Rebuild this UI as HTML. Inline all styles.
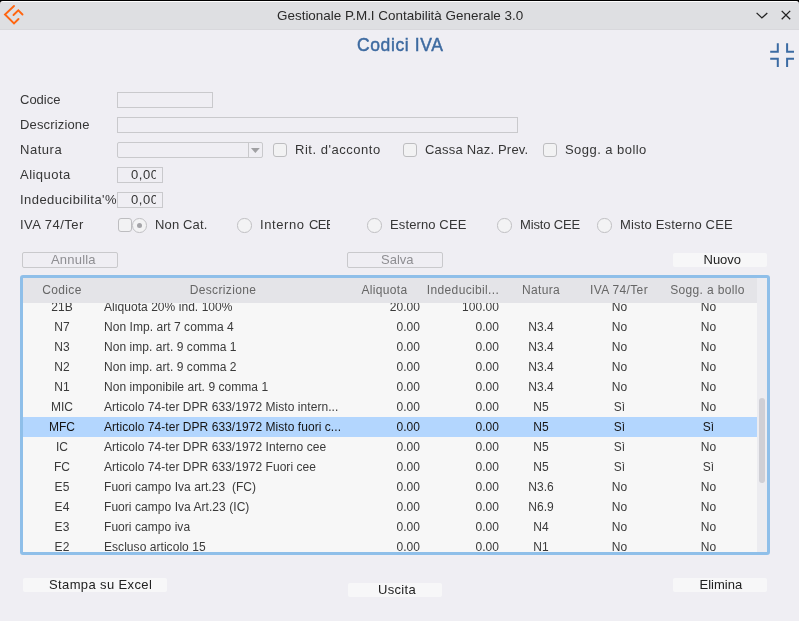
<!DOCTYPE html>
<html><head><meta charset="utf-8">
<style>
*{margin:0;padding:0;box-sizing:border-box}
html,body{width:799px;height:621px;overflow:hidden;background:#efeef3;font-family:"Liberation Sans",sans-serif;color:#333}
body{will-change:transform}
.a{position:absolute;white-space:nowrap}
#blk{position:absolute;left:0;top:0;width:799px;height:4px;background:#000}
#top{position:absolute;left:0;top:1px;width:799px;height:29px;background:#dedfe2;border-radius:3px 3px 0 0;border-top:1px solid #fdfdfd;border-bottom:1px solid #d8d8dc}
.lbl{position:absolute;white-space:nowrap;font-size:13px;color:#363636;left:20px}
.fld{position:absolute;border:1px solid #c9c9cc;background:#efeef3}
.chk{position:absolute;width:14px;height:14px;border:1.2px solid #bdbdc0;border-radius:3px;background:#f2f2f3}
.rad{position:absolute;width:14.5px;height:14.5px;border:1px solid #c0c0c3;border-radius:50%;background:#f3f3f4}
.opt{position:absolute;white-space:nowrap;font-size:13px;color:#363636}
.btn{position:absolute;white-space:nowrap;font-size:13px}
.btn span{position:absolute;line-height:15px}
.dis{border:1px solid #c9c9cc;border-radius:2px;color:#8e8e92;background:#efeef3}
.en{background:#f7f7f8;color:#222;border-radius:2px}
#tbl{position:absolute;left:20px;top:275px;width:750px;height:280px;border:3px solid #8fbfe9;border-radius:3px;background:#f7f7f7;overflow:hidden}
#rows{position:absolute;left:0;top:0;width:734px;height:274px;overflow:hidden}
#hdr{position:absolute;left:0;top:0;width:734px;height:25px;background:#e4e4e8;z-index:2}
.h{position:absolute;top:5px;font-size:12px;color:#666;text-align:center;letter-spacing:0.35px}
.row{position:absolute;left:0;width:734px;height:20px;font-size:12px;color:#3a3a3a;letter-spacing:0.05px}
.row span{position:absolute;top:3px}
.c0{left:0;width:78px;text-align:center}
.c1{left:81px}
.c2{left:322px;width:75px;text-align:right}
.c3{left:401px;width:75px;text-align:right}
.c4{left:479px;width:78px;text-align:center}
.c5{left:557.5px;width:78px;text-align:center}
.c6{left:636px;width:99px;text-align:center}
.sel{background:#b3d6fe;color:#141414}
#sb{position:absolute;left:734px;top:0;width:10px;height:274px;background:#ececf0}
#thumb{position:absolute;left:2px;top:120px;width:5.5px;height:85px;background:#cfcfd5;border-radius:3px}
</style></head><body>
<div id="blk"></div><div id="top"></div>
<svg class="a" style="left:0;top:0" width="30" height="30" viewBox="0 0 30 30">
<path d="M14 6 L5 14.5 L14 23.5 L18.5 19 M13.5 15 L18.3 10.3 L22.5 14.5" fill="none" stroke="#ff6510" stroke-width="1.9" stroke-linecap="round" stroke-linejoin="miter"/>
</svg>
<div class="a" style="left:277px;top:7.6px;font-size:13.45px;color:#2a2a2a">Gestionale P.M.I Contabilità Generale 3.0</div>
<svg class="a" style="left:750px;top:0" width="49" height="30" viewBox="750 0 49 30">
<path d="M756.6 12.9 L761.9 17.9 L767.3 12.9" fill="none" stroke="#222" stroke-width="1.3"/>
<path d="M781.7 10.9 L790.2 19.3 M790.2 10.9 L781.7 19.3" fill="none" stroke="#222" stroke-width="1.3"/>
</svg>
<div class="a" style="left:357px;top:35px;font-size:17.5px;color:#3d6aa0;-webkit-text-stroke:0.45px #3d6aa0;letter-spacing:0.6px">Codici IVA</div>
<svg class="a" style="left:760px;top:35px" width="40" height="40" viewBox="760 35 40 40">
<path d="M777.8 43.3 V51.8 H770.2 M787.1 43.3 V51.8 H794 M770.2 58.8 H777.8 V67 M794 58.8 H787.1 V67" fill="none" stroke="#3b6ba3" stroke-width="2"/>
</svg>

<div class="lbl" style="top:92px">Codice</div>
<div class="fld" style="left:117px;top:92px;width:96px;height:16px"></div>
<div class="lbl" style="top:117px;letter-spacing:0.15px">Descrizione</div>
<div class="fld" style="left:117px;top:117px;width:401px;height:16px"></div>
<div class="lbl" style="top:142px;letter-spacing:0.54px">Natura</div>
<div class="fld" style="left:117px;top:142px;width:146px;height:16px;border-radius:2px"></div>
<div class="a" style="left:248px;top:143px;width:1px;height:14px;background:#c9c9cc"></div>
<svg class="a" style="left:250px;top:146px" width="11" height="8"><path d="M0.9 2 L9.8 2 L5.35 7 Z" fill="#a0a0a3"/></svg>
<div class="chk" style="left:273px;top:143px"></div>
<div class="opt" style="left:295px;top:142px;letter-spacing:0.52px">Rit. d'acconto</div>
<div class="chk" style="left:403px;top:143px"></div>
<div class="opt" style="left:425px;top:142px;letter-spacing:0.2px">Cassa Naz. Prev.</div>
<div class="chk" style="left:543px;top:143px"></div>
<div class="opt" style="left:565px;top:142px;letter-spacing:0.45px">Sogg. a bollo</div>
<div class="lbl" style="top:167px;letter-spacing:0.47px">Aliquota</div>
<div class="fld" style="left:117px;top:167px;width:46px;height:16px"><div class="a" style="left:0;top:0;width:38px;height:14px;overflow:hidden"><span class="a" style="left:13px;top:-1.3px;font-size:13px;color:#333;letter-spacing:0.6px">0,00</span></div></div>
<div class="lbl" style="top:192px;letter-spacing:0.44px">Indeducibilita'%</div>
<div class="fld" style="left:117px;top:192px;width:46px;height:16px"><div class="a" style="left:0;top:0;width:38px;height:14px;overflow:hidden"><span class="a" style="left:13px;top:-1.3px;font-size:13px;color:#333;letter-spacing:0.6px">0,00</span></div></div>
<div class="lbl" style="top:217px;letter-spacing:0.48px">IVA 74/Ter</div>
<div class="chk" style="left:118px;top:218px"></div>
<div class="rad" style="left:132px;top:218px"><div style="position:absolute;left:3.75px;top:3.75px;width:5px;height:5px;border-radius:50%;background:#a4a4a8"></div></div>
<div class="opt" style="left:155px;top:217px;letter-spacing:0.15px">Non Cat.</div>
<div class="rad" style="left:237px;top:218px"></div>
<div class="opt" style="left:260px;top:217px;width:70px;overflow:hidden;letter-spacing:0.6px">Interno <span style="letter-spacing:-0.5px">CEE</span></div>
<div class="rad" style="left:367px;top:218px"></div>
<div class="opt" style="left:390px;top:217px;letter-spacing:0.12px">Esterno CEE</div>
<div class="rad" style="left:497px;top:218px"></div>
<div class="opt" style="left:520px;top:217px;letter-spacing:-0.15px">Misto CEE</div>
<div class="rad" style="left:597px;top:218px"></div>
<div class="opt" style="left:620px;top:217px;letter-spacing:0.18px">Misto Esterno CEE</div>

<div class="btn dis" style="left:22px;top:252px;width:96px;height:16px"><span style="left:28px;top:-1.5px;letter-spacing:0.2px">Annulla</span></div>
<div class="btn dis" style="left:347px;top:252px;width:96px;height:16px"><span style="left:33px;top:-1.5px;letter-spacing:0px">Salva</span></div>
<div class="btn en" style="left:673px;top:253px;width:94px;height:14px"><span style="left:30.5px;top:-1px">Nuovo</span></div>

<div id="tbl">
<div id="hdr">
<div class="h" style="left:0;width:78px">Codice</div>
<div class="h" style="left:78px;width:244px">Descrizione</div>
<div class="h" style="left:322px;width:79px">Aliquota</div>
<div class="h" style="left:401px;width:78px">Indeducibil...</div>
<div class="h" style="left:479px;width:78px">Natura</div>
<div class="h" style="left:557px;width:78px">IVA 74/Ter</div>
<div class="h" style="left:635px;width:99px">Sogg. a bollo</div>
</div>
<div id="rows">
<div class="row" style="top:19px"><span class="c0">21B</span><span class="c1">Aliquota 20% ind. 100%</span><span class="c2">20.00</span><span class="c3">100.00</span><span class="c4"></span><span class="c5">No</span><span class="c6">No</span></div>
<div class="row" style="top:39px"><span class="c0">N7</span><span class="c1">Non Imp. art 7 comma 4</span><span class="c2">0.00</span><span class="c3">0.00</span><span class="c4">N3.4</span><span class="c5">No</span><span class="c6">No</span></div>
<div class="row" style="top:59px"><span class="c0">N3</span><span class="c1">Non imp. art. 9 comma 1</span><span class="c2">0.00</span><span class="c3">0.00</span><span class="c4">N3.4</span><span class="c5">No</span><span class="c6">No</span></div>
<div class="row" style="top:79px"><span class="c0">N2</span><span class="c1">Non imp. art. 9 comma 2</span><span class="c2">0.00</span><span class="c3">0.00</span><span class="c4">N3.4</span><span class="c5">No</span><span class="c6">No</span></div>
<div class="row" style="top:99px"><span class="c0">N1</span><span class="c1">Non imponibile art. 9 comma 1</span><span class="c2">0.00</span><span class="c3">0.00</span><span class="c4">N3.4</span><span class="c5">No</span><span class="c6">No</span></div>
<div class="row" style="top:119px"><span class="c0">MIC</span><span class="c1">Articolo 74-ter DPR 633/1972 Misto intern...</span><span class="c2">0.00</span><span class="c3">0.00</span><span class="c4">N5</span><span class="c5">Sì</span><span class="c6">No</span></div>
<div class="row sel" style="top:139px"><span class="c0">MFC</span><span class="c1">Articolo 74-ter DPR 633/1972 Misto fuori c...</span><span class="c2">0.00</span><span class="c3">0.00</span><span class="c4">N5</span><span class="c5">Sì</span><span class="c6">Sì</span></div>
<div class="row" style="top:159px"><span class="c0">IC</span><span class="c1">Articolo 74-ter DPR 633/1972 Interno cee</span><span class="c2">0.00</span><span class="c3">0.00</span><span class="c4">N5</span><span class="c5">Sì</span><span class="c6">No</span></div>
<div class="row" style="top:179px"><span class="c0">FC</span><span class="c1">Articolo 74-ter DPR 633/1972 Fuori cee</span><span class="c2">0.00</span><span class="c3">0.00</span><span class="c4">N5</span><span class="c5">Sì</span><span class="c6">Sì</span></div>
<div class="row" style="top:199px"><span class="c0">E5</span><span class="c1">Fuori campo Iva art.23 &nbsp;(FC)</span><span class="c2">0.00</span><span class="c3">0.00</span><span class="c4">N3.6</span><span class="c5">No</span><span class="c6">No</span></div>
<div class="row" style="top:219px"><span class="c0">E4</span><span class="c1">Fuori campo Iva Art.23 (IC)</span><span class="c2">0.00</span><span class="c3">0.00</span><span class="c4">N6.9</span><span class="c5">No</span><span class="c6">No</span></div>
<div class="row" style="top:239px"><span class="c0">E3</span><span class="c1">Fuori campo iva</span><span class="c2">0.00</span><span class="c3">0.00</span><span class="c4">N4</span><span class="c5">No</span><span class="c6">No</span></div>
<div class="row" style="top:259px"><span class="c0">E2</span><span class="c1">Escluso articolo 15</span><span class="c2">0.00</span><span class="c3">0.00</span><span class="c4">N1</span><span class="c5">No</span><span class="c6">No</span></div>
</div>
<div id="sb"><div id="thumb"></div></div>
</div>

<div class="btn en" style="left:23px;top:578px;width:144px;height:14px"><span style="left:26px;top:-1.5px;letter-spacing:0.38px">Stampa su Excel</span></div>
<div class="btn en" style="left:348px;top:583px;width:94px;height:14px"><span style="left:30px;top:-1.5px;letter-spacing:0.3px">Uscita</span></div>
<div class="btn en" style="left:673px;top:578px;width:94px;height:14px"><span style="left:26.5px;top:-1px">Elimina</span></div>
</body></html>
